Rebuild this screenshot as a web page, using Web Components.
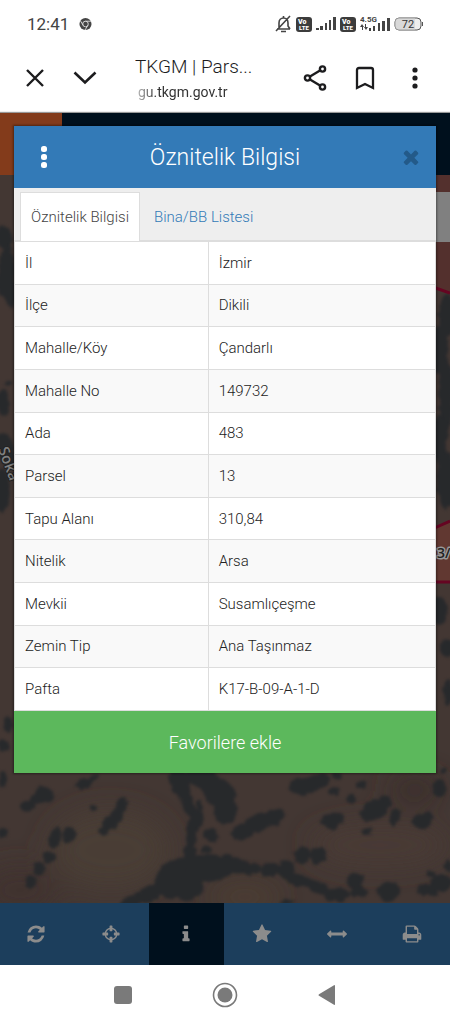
<!DOCTYPE html>
<html lang="tr">
<head>
<meta charset="utf-8">
<meta name="viewport" content="width=device-width, initial-scale=1">
<title>TKGM | Parsel Sorgu</title>
<style>
  body {
    margin: 0;
    min-height: 100vh;
    display: flex;
    flex-direction: column;
    background: #fff;
    font-family: Roboto, "Liberation Sans", sans-serif;
  }
</style>
</head>
<body>
  <status-bar></status-bar>
  <browser-bar>
    <span slot="title">TKGM | Pars...</span>
    <span slot="url">gu.tkgm.gov.tr</span>
  </browser-bar>
  <parcel-app>
    <parcel-dialog heading="Öznitelik Bilgisi">
      <tab-list slot="tabs" items="Öznitelik Bilgisi|Bina/BB Listesi"></tab-list>
      <attribute-table></attribute-table>
    </parcel-dialog>
  </parcel-app>
  <system-nav></system-nav>

<script>
const ICONS = {
  refresh: `<path transform="translate(128 128)" d="M1511 928q0 5-1 7-64 268-268 434.500t-478 166.500q-146 0-282.500-55t-243.500-157l-129 129q-19 19-45 19t-45-19-19-45v-448q0-26 19-45t45-19h448q26 0 45 19t19 45-19 45l-137 137q71 66 161 102t187 36q134 0 250-65t186-179q11-17 53-117 8-23 30-23h192q13 0 22.500 9.500t9.500 22.500zm25-800v448q0 26-19 45t-45 19h-448q-26 0-45-19t-19-45 19-45l138-138q-148-137-349-137-134 0-250 65t-186 179q-11 17-53 117-8 23-30 23h-199q-13 0-22.500-9.500t-9.500-22.500v-7q65-268 270-434.500t480-166.500q146 0 284 55.500t245 156.500l130-129q19-19 45-19t45 19 19 45z"/>`,
  crosshairs: `<path d="M1325 1024h-109q-26 0-45-19t-19-45v-128q0-26 19-45t45-19h109q-32-108-112.500-188.500t-188.500-112.500v109q0 26-19 45t-45 19h-128q-26 0-45-19t-19-45v-109q-108 32-188.500 112.500t-112.500 188.500h109q26 0 45 19t19 45v128q0 26-19 45t-45 19h-109q32 108 112.500 188.500t188.500 112.500v-109q0-26 19-45t45-19h128q26 0 45 19t19 45v109q108-32 188.500-112.500t112.500-188.500zm339-192v128q0 26-19 45t-45 19h-143q-37 161-154.500 278.500t-278.500 154.500v143q0 26-19 45t-45 19h-128q-26 0-45-19t-19-45v-143q-161-37-278.500-154.500t-154.500-278.500h-143q-26 0-45-19t-19-45v-128q0-26 19-45t45-19h143q37-161 154.500-278.500t278.500-154.500v-143q0-26 19-45t45-19h128q26 0 45 19t19 45v143q161 37 278.500 154.500t154.500 278.500h143q26 0 45 19t19 45z"/>`,
  info: `<path d="M1216 1344v128q0 26-19 45t-45 19h-512q-26 0-45-19t-19-45v-128q0-26 19-45t45-19h64v-384h-64q-26 0-45-19t-19-45v-128q0-26 19-45t45-19h384q26 0 45 19t19 45v576h64q26 0 45 19t19 45zm-128-1152v192q0 26-19 45t-45 19h-256q-26 0-45-19t-19-45v-192q0-26 19-45t45-19h256q26 0 45 19t19 45z"/>`,
  star: `<path d="M1728 647q0 22-26 48l-363 354 86 500q1 7 1 20 0 21-10.500 35.500t-30.500 14.500q-19 0-40-12l-449-236-449 236q-22 12-40 12-21 0-31.500-14.500t-10.500-35.500q0-6 2-20l86-500-364-354q-25-27-25-48 0-37 56-46l502-73 225-455q19-41 49-41t49 41l225 455 502 73q56 9 56 46z"/>`,
  measure: `<path d="M1792 896q0 26-19 45l-256 256q-19 19-45 19t-45-19-19-45v-128h-1024v128q0 26-19 45t-45 19-45-19l-256-256q-19-19-19-45t19-45l256-256q19-19 45-19t45 19 19 45v128h1024v-128q0-26 19-45t45-19 45 19l256 256q19 19 19 45z"/>`,
  print: `<path d="M448 1536h896v-256h-896v256zm0-640h896v-384h-160q-40 0-68-28t-28-68v-160h-640v640zm1152 64q0-26-19-45t-45-19-45 19-19 45 19 45 45 19 45-19 19-45zm128 0v416q0 13-9.500 22.500t-22.500 9.500h-224v160q0 40-28 68t-68 28h-960q-40 0-68-28t-28-68v-160h-224q-13 0-22.500-9.500t-9.500-22.500v-416q0-79 56.500-135.500t135.500-56.500h64v-544q0-40 28-68t68-28h672q40 0 88 20t76 48l152 152q28 28 48 76t20 88v256h64q79 0 135.500 56.500t56.500 135.500z"/>`,
  times: `<path d="M1490 1322q0 40-28 68l-136 136q-28 28-68 28t-68-28l-294-294-294 294q-28 28-68 28t-68-28l-136-136q-28-28-28-68t28-68l294-294-294-294q-28-28-28-68t28-68l136-136q28-28 68-28t68 28l294 294 294-294q28-28 68-28t68 28l136 136q28 28 28 68t-28 68l-294 294 294 294q28 28 28 68z"/>`
};

const resetButton = /* css */`
  button {
    appearance: none;
    border: 0;
    margin: 0;
    padding: 0;
    background: none;
    color: inherit;
    font: inherit;
    cursor: pointer;
    display: grid;
    place-items: center;
  }

  svg {
    display: block;
  }
`;

class StatusBar extends HTMLElement {
  constructor() {
    super();
    this.attachShadow({ mode: "open" });
  }

  static get styles() {
    return /* css */`
      :host {
        display: flex;
        align-items: center;
        justify-content: space-between;
        height: 48px;
        padding: 0 26px 0 27px;
        color: #444;
      }

      .left, .right {
        display: flex;
        align-items: center;
      }

      .left {
        gap: 10px;
        font-size: 17px;
      }

      .right {
        gap: 4px;
      }

      svg {
        display: block;
      }
    `;
  }

  connectedCallback() {
    this.render();
  }

  get volte() {
    return /* html */`
      <svg width="16" height="15" viewBox="0 0 16 15" fill="#fff" font-weight="900">
        <rect width="16" height="15" rx="3" fill="#3c3c3c"/>
        <text x="2" y="7" font-size="7">Vo</text>
        <text x="3" y="13" font-size="6">LTE</text>
      </svg>`;
  }

  render() {
    this.shadowRoot.innerHTML = /* html */`
    <style>${StatusBar.styles}</style>
    <div class="left">
      <time>12:41</time>
      <svg width="13" height="14" viewBox="0 0 14 14" fill="none">
        <circle cx="7" cy="7" r="6.500" fill="#444"/>
        <circle cx="7" cy="7" r="3" stroke="#ddd"/>
        <path d="M7 4h6M4.500 8.500l-3-5M9.500 8.500l-3 5" stroke="#ddd"/>
      </svg>
    </div>
    <div class="right">
      <svg width="17" height="18" viewBox="0 0 17 18" fill="none" stroke="#444" stroke-width="1.600">
        <path d="M2 14h13M4 13V8c0-3 2-5 4.500-5S13 5 13 8v3l2 3M8.500 1v2M6 16.500h5M1 16 15 1"/>
      </svg>
      ${this.volte}
      <svg width="20" height="14" viewBox="0 0 20 14" fill="#444">
        <path d="M0 11h3v2H0zM4 9h3v4H4zM9 6h2v7H9zM13 3h2v10h-2zM17 0h3v13h-3z"/>
      </svg>
      ${this.volte}
      <svg width="30" height="18" viewBox="0 0 30 18" fill="#444">
        <text x="0" y="7" font-size="8" font-weight="700">4.5G</text>
        <path d="M2 9 4 12H3v3H2v-3H0zM6 15l-2-3h1V9h1v3h2zM9 13h2v3H9zM13 11h2v5h-2zM18 8h2v8h-2zM22 6h3v10h-3zM27 3h3v13h-3z"/>
      </svg>
      <svg width="30" height="14" viewBox="0 0 30 14">
        <rect x="1" y="1" width="26" height="12" rx="4" fill="#eee" stroke="#555"/>
        <path d="M4 1h17v12H4a3 3 0 0 1-3-3V4a3 3 0 0 1 3-3z" fill="#ccc" opacity=".6"/>
        <path d="M28 5h1v4h-1z" fill="#555"/>
        <text x="14" y="11" font-size="11" text-anchor="middle" fill="#333">72</text>
      </svg>
    </div>`;
  }
}

class BrowserBar extends HTMLElement {
  constructor() {
    super();
    this.attachShadow({ mode: "open" });
  }

  static get styles() {
    return /* css */`
      ${resetButton}

      :host {
        display: flex;
        align-items: center;
        height: 65px;
        padding: 0 10px 6px;
        box-sizing: border-box;
        color: #1c1c1e;
      }

      button {
        width: 50px;
        height: 50px;
      }

      .page {
        flex: 1;
        min-width: 0;
        margin-left: 25px;
        padding-top: 3px;
        white-space: nowrap;
        overflow: hidden;
      }

      .title {
        font-size: 19px;
        font-weight: 300;
        line-height: 26px;
      }

      .url {
        font-size: 14px;
        line-height: 24px;
        padding-left: 3px;
        color: #333;
        -webkit-mask-image: linear-gradient(90deg, #0006 4px, #000 22px);
        mask-image: linear-gradient(90deg, #0006 4px, #000 22px);
      }
    `;
  }

  connectedCallback() {
    this.render();
  }

  render() {
    this.shadowRoot.innerHTML = /* html */`
    <style>${BrowserBar.styles}</style>
    <button aria-label="Kapat">
      <svg width="18" height="18" viewBox="0 0 18 18" fill="none" stroke="currentColor" stroke-width="2.400">
        <path d="m1 1 16 16M17 1 1 17"/>
      </svg>
    </button>
    <button aria-label="Küçült">
      <svg width="24" height="14" viewBox="0 0 24 14" fill="none" stroke="currentColor" stroke-width="2.600">
        <path d="m1.500 1.500 10.500 10 10.500-10"/>
      </svg>
    </button>
    <div class="page">
      <div class="title"><slot name="title"></slot></div>
      <div class="url"><slot name="url"></slot></div>
    </div>
    <button aria-label="Paylaş">
      <svg width="24" height="26" viewBox="0 0 24 26" fill="none" stroke="currentColor" stroke-width="2.400">
        <circle cx="4.500" cy="13" r="2.600"/>
        <circle cx="19.500" cy="4" r="2.600"/>
        <circle cx="19.500" cy="22" r="2.600"/>
        <path d="m7 11.500 10-6M7 14.500l10 6"/>
      </svg>
    </button>
    <button aria-label="Yer işareti">
      <svg width="20" height="24" viewBox="0 0 20 24" fill="none" stroke="currentColor" stroke-width="2.300">
        <path d="M2 22V4q0-2 2-2h12q2 0 2 2v18l-8-4z"/>
      </svg>
    </button>
    <button aria-label="Menü">
      <svg width="6" height="22" viewBox="0 0 6 22" fill="currentColor">
        <circle cx="3" cy="3" r="2.600"/>
        <circle cx="3" cy="11" r="2.600"/>
        <circle cx="3" cy="19" r="2.600"/>
      </svg>
    </button>`;
  }
}

class MapView extends HTMLElement {
  constructor() {
    super();
    this.attachShadow({ mode: "open" });
  }

  static get styles() {
    return /* css */`
      :host {
        display: block;
        overflow: hidden;
        background: #433630;
      }

      svg {
        display: block;
        width: 100%;
        height: 100%;
      }
    `;
  }

  // Clumps of trees and bushes: x, y, rx, ry, rotation
  static get bushes() {
    return [
      [28, 806, 7, 6, 0], [44, 795, 10, 8, 20], [37, 799, 8, 5, 0], [83, 784, 9, 5, -10], [93, 778, 7, 3, -30],
      [122, 805, 6, 7, 0], [117, 815, 6, 9, 25], [110, 823, 8, 7, 0], [104, 831, 6, 5, 0], [93, 808, 4, 3, 0],
      [69, 835, 7, 8, 20], [55, 838, 6, 11, 15], [49, 857, 7, 6, -20], [39, 869, 6, 7, 0], [31, 882, 6, 7, 0],
      [3, 833, 5, 5, 0], [3, 780, 4, 9, 0],
      [180, 783, 10, 17, -20], [188, 804, 6, 17, -20], [197, 820, 6, 11, 0], [191, 835, 5, 15, 0],
      [204, 779, 19, 10, 20], [219, 793, 18, 14, 35], [225, 809, 12, 15, 0], [199, 805, 3, 5, 0],
      [211, 835, 8, 7, 0], [207, 849, 5, 4, 0], [190, 851, 6, 9, 0],
      [244, 831, 13, 8, -20], [258, 823, 15, 9, -20], [274, 817, 11, 8, -20],
      [180, 868, 22, 10, -15], [205, 868, 29, 14, 0], [172, 882, 17, 17, -30], [190, 890, 14, 10, -30],
      [151, 893, 14, 8, -25], [134, 900, 14, 6, -20], [236, 866, 13, 8, 0], [227, 857, 5, 4, 0],
      [251, 869, 9, 6, 0], [270, 870, 10, 7, 0], [286, 869, 9, 9, 0], [298, 880, 13, 6, 15], [317, 887, 12, 6, 20],
      [337, 895, 13, 7, 0], [355, 881, 8, 9, 0], [359, 892, 9, 6, 0], [389, 892, 11, 10, 0], [287, 902, 7, 3, 0],
      [428, 890, 12, 6, 0], [441, 883, 11, 9, 0], [448, 866, 4, 6, 0], [431, 874, 4, 3, 0],
      [302, 855, 8, 9, 0], [318, 855, 9, 8, 0],
      [303, 786, 14, 9, 0], [316, 783, 12, 7, -10], [323, 778, 7, 5, 0], [334, 791, 6, 4, 0], [351, 799, 5, 5, 0],
      [361, 785, 5, 4, 0], [337, 776, 5, 4, 0], [331, 821, 10, 8, 0], [339, 819, 5, 6, 0],
      [376, 809, 13, 10, -20], [369, 814, 9, 7, 0], [385, 803, 7, 7, 0], [395, 817, 5, 9, 20], [367, 831, 6, 4, 0],
      [422, 821, 9, 8, 0], [428, 817, 5, 5, 0], [440, 788, 7, 9, 0], [444, 771, 4, 3, 0],
      [4, 237, 8, 12, 0], [7, 270, 8, 27, 0], [11, 294, 7, 14, 0], [2, 284, 6, 12, 0], [3, 402, 6, 14, 0],
      [6, 451, 9, 20, -20], [2, 490, 8, 22, 0], [9, 383, 3, 3, 0], [8, 724, 5, 8, 0], [3, 745, 6, 6, 0],
      [447, 315, 9, 20, 0], [440, 350, 8, 25, 0], [446, 396, 7, 36, 0], [440, 440, 7, 25, 0], [446, 480, 9, 29, 0],
      [439, 610, 8, 14, 0], [447, 648, 7, 9, 0], [448, 692, 5, 13, 0]
    ];
  }

  connectedCallback() {
    this.render();
  }

  render() {
    const bushes = MapView.bushes
      .map(([x, y, rx, ry, angle]) =>
        `<ellipse cx="${x}" cy="${y}" rx="${rx}" ry="${ry}" transform="rotate(${angle} ${x} ${y})"/>`)
      .join("");

    this.shadowRoot.innerHTML = /* html */`
    <style>${MapView.styles}</style>
    <svg viewBox="0 175 450 728" preserveAspectRatio="xMidYMax slice">
      <defs>
        <filter id="rough" x="-5%" y="-5%" width="110%" height="110%" color-interpolation-filters="sRGB">
          <feTurbulence type="fractalNoise" baseFrequency=".16" numOctaves="3" seed="8"/>
          <feDisplacementMap in="SourceGraphic" scale="6" xChannelSelector="R" yChannelSelector="G"/>
          <feGaussianBlur stdDeviation="1.500"/>
        </filter>
        <filter id="soft" x="-50%" y="-50%" width="200%" height="200%">
          <feGaussianBlur stdDeviation="14"/>
        </filter>
      </defs>
      <rect y="175" width="450" height="728" fill="#433733"/>
      <g filter="url(#soft)">
        <ellipse cx="110" cy="850" rx="60" ry="40" fill="#4a3d36"/>
        <ellipse cx="380" cy="845" rx="70" ry="20" fill="#493b36"/>
        <ellipse cx="245" cy="897" rx="35" ry="10" fill="#503f32"/>
        <ellipse cx="20" cy="890" rx="40" ry="22" fill="#40332f"/>
        <ellipse cx="415" cy="790" rx="28" ry="14" fill="#3a2e2c"/>
      </g>
      <g fill="#25282b" opacity=".92" filter="url(#rough)">${bushes}</g>
      <path d="M430 175h20v118l-20-7z" fill="#6b2626" opacity=".4"/>
      <path d="M430 530l20-9v61h-20z" fill="#8f3a30" opacity=".4"/>
      <path d="m430 286 20 7M430 530l20-9M430 582h20" stroke="#650522" stroke-width="3"/>
      <rect x="430" y="192" width="20" height="50" fill="#808080"/>
      <g font-family="Open Sans, sans-serif" font-weight="600" paint-order="stroke" stroke-linejoin="round">
        <text x="437" y="558" font-size="14" fill="#222" stroke="#999" stroke-width="3">3/</text>
        <text transform="translate(-2 449) rotate(70)" font-size="15" fill="#808080" stroke="#222" stroke-width="2">Soka</text>
      </g>
    </svg>`;
  }
}

class ToolBar extends HTMLElement {
  constructor() {
    super();
    this.attachShadow({ mode: "open" });
  }

  static get styles() {
    return /* css */`
      ${resetButton}

      :host {
        display: grid;
        grid-auto-flow: column;
        grid-auto-columns: 1fr;
        height: 62px;
        margin-left: -2px;
        background: #1c3e5c;
        color: #8c8c8c;
      }

      .active {
        background: #00101d;
      }
    `;
  }

  connectedCallback() {
    this.render();
  }

  render() {
    const tools = [
      ["refresh", "Yenile"],
      ["crosshairs", "Konum"],
      ["info", "Bilgi"],
      ["star", "Favoriler"],
      ["measure", "Ölçüm"],
      ["print", "Yazdır"]
    ];

    this.shadowRoot.innerHTML = /* html */`
    <style>${ToolBar.styles}</style>
    ${tools.map(([icon, label]) => /* html */`
      <button class="${icon === "info" ? "active" : ""}" aria-label="${label}">
        <svg width="20" height="20" viewBox="0 0 1792 1792" fill="currentColor">${ICONS[icon]}</svg>
      </button>`).join("")}`;
  }
}

class TabList extends HTMLElement {
  constructor() {
    super();
    this.attachShadow({ mode: "open" });
  }

  static get styles() {
    return /* css */`
      ${resetButton}

      :host {
        display: flex;
        gap: 3px;
        height: 53px;
        box-sizing: border-box;
        padding: 4px 6px 0;
        background: #eee;
        border-bottom: 1px solid #ddd;
        font-size: 15px;
        font-weight: 300;
      }

      button {
        padding: 0 10px;
        border: 1px solid transparent;
        border-bottom: 0;
        color: #337ab7;
      }

      button[aria-selected="true"] {
        background: #fff;
        border-color: #ddd;
        color: #444;
        margin-bottom: -1px;
      }
    `;
  }

  connectedCallback() {
    this.items = this.getAttribute("items").split("|");
    this.render();
  }

  render() {
    this.shadowRoot.innerHTML = /* html */`
    <style>${TabList.styles}</style>
    ${this.items.map((item, i) => `<button role="tab" aria-selected="${i === 0}">${item}</button>`).join("")}`;
    this.setAttribute("role", "tablist");
  }
}

class AttributeTable extends HTMLElement {
  constructor() {
    super();
    this.attachShadow({ mode: "open" });
  }

  static get styles() {
    return /* css */`
      :host {
        display: block;
        background: #fff;
        color: #222;
        font-size: 15px;
      }

      table {
        width: 100%;
        height: 470px;
        border-collapse: collapse;
        table-layout: fixed;
      }

      th, td {
        padding: 0 10px;
        border: 1px solid #ddd;
        font-weight: 300;
        line-height: 20px;
        text-align: left;
      }

      th {
        width: 46%;
        box-sizing: border-box;
      }

      tr:nth-child(even) {
        background: #f9f9f9;
      }
    `;
  }

  connectedCallback() {
    this.render();
  }

  render() {
    const rows = [
      ["İl", "İzmir"],
      ["İlçe", "Dikili"],
      ["Mahalle/Köy", "Çandarlı"],
      ["Mahalle No", "149732"],
      ["Ada", "483"],
      ["Parsel", "13"],
      ["Tapu Alanı", "310,84"],
      ["Nitelik", "Arsa"],
      ["Mevkii", "Susamlıçeşme"],
      ["Zemin Tip", "Ana Taşınmaz"],
      ["Pafta", "K17-B-09-A-1-D"]
    ];

    this.shadowRoot.innerHTML = /* html */`
    <style>${AttributeTable.styles}</style>
    <table>
      <tbody>
        ${rows.map(([name, value]) => `<tr><th scope="row">${name}</th><td>${value}</td></tr>`).join("")}
      </tbody>
    </table>`;
  }
}

class ParcelDialog extends HTMLElement {
  constructor() {
    super();
    this.attachShadow({ mode: "open" });
  }

  static get styles() {
    return /* css */`
      ${resetButton}

      :host {
        display: block;
        box-shadow: 0 0 2px 1px #0006;
      }

      header {
        display: grid;
        grid-template-columns: 60px 1fr 50px;
        align-items: center;
        height: 62px;
        background: #337ab7;
        color: #fff;
      }

      header button {
        height: 50px;
      }

      .close {
        color: #235a89;
      }

      h2 {
        margin: 0;
        padding-right: 10px;
        font-size: 23px;
        font-weight: 300;
        text-align: center;
      }

      .favorite {
        width: 100%;
        height: 62px;
        background: #5cb85c;
        color: #fff;
        font-size: 18px;
        font-weight: 300;
      }
    `;
  }

  connectedCallback() {
    this.render();
  }

  render() {
    this.shadowRoot.innerHTML = /* html */`
    <style>${ParcelDialog.styles}</style>
    <header>
      <button aria-label="Seçenekler">
        <svg width="6" height="22" viewBox="0 0 6 22" fill="currentColor">
          <rect y="0" width="6" height="6" rx="2.500"/>
          <rect y="8" width="6" height="6" rx="2.500"/>
          <rect y="16" width="6" height="6" rx="2.500"/>
        </svg>
      </button>
      <h2>${this.getAttribute("heading")}</h2>
      <button class="close" aria-label="Kapat">
        <svg width="22" height="22" viewBox="0 0 1792 1792" fill="currentColor">${ICONS.times}</svg>
      </button>
    </header>
    <slot name="tabs"></slot>
    <slot></slot>
    <button class="favorite">Favorilere ekle</button>`;
  }
}

class ParcelApp extends HTMLElement {
  constructor() {
    super();
    this.attachShadow({ mode: "open" });
  }

  static get styles() {
    return /* css */`
      :host {
        flex: 1;
        display: flex;
        flex-direction: column;
        position: relative;
      }

      .banner {
        height: 62px;
        background: linear-gradient(90deg, #833b1b 62px, #00101d 62px);
        box-shadow: 0 -1px 1px #0006;
      }

      map-view {
        flex: 1 1 0;
        min-height: 600px;
      }

      .overlay {
        position: absolute;
        inset: 13px 14px auto;
      }
    `;
  }

  connectedCallback() {
    this.render();
  }

  render() {
    this.shadowRoot.innerHTML = /* html */`
    <style>${ParcelApp.styles}</style>
    <div class="banner"></div>
    <map-view></map-view>
    <tool-bar></tool-bar>
    <div class="overlay"><slot></slot></div>`;
  }
}

class SystemNav extends HTMLElement {
  constructor() {
    super();
    this.attachShadow({ mode: "open" });
  }

  static get styles() {
    return /* css */`
      ${resetButton}

      :host {
        display: flex;
        justify-content: center;
        align-items: center;
        gap: 52px;
        height: 59px;
        background: #fff;
        color: #7a7a7a;
      }

      button {
        width: 50px;
        height: 50px;
      }
    `;
  }

  connectedCallback() {
    this.render();
  }

  render() {
    this.shadowRoot.innerHTML = /* html */`
    <style>${SystemNav.styles}</style>
    <button aria-label="Son uygulamalar">
      <svg width="18" height="18" viewBox="0 0 18 18" fill="currentColor"><rect width="18" height="18" rx="3"/></svg>
    </button>
    <button aria-label="Ana ekran">
      <svg width="26" height="26" viewBox="0 0 26 26" fill="currentColor">
        <circle cx="13" cy="13" r="11.500" fill="none" stroke="currentColor" stroke-width="1.600"/>
        <circle cx="13" cy="13" r="7.500"/>
      </svg>
    </button>
    <button aria-label="Geri">
      <svg width="18" height="20" viewBox="0 0 18 20" fill="currentColor"><path d="M1 9.200 16 .2q1-.6 1 .8v18q0 1.400-1 .8L1 10.800q-1-.8 0-1.600z"/></svg>
    </button>`;
  }
}

customElements.define("status-bar", StatusBar);
customElements.define("browser-bar", BrowserBar);
customElements.define("map-view", MapView);
customElements.define("tool-bar", ToolBar);
customElements.define("tab-list", TabList);
customElements.define("attribute-table", AttributeTable);
customElements.define("parcel-dialog", ParcelDialog);
customElements.define("parcel-app", ParcelApp);
customElements.define("system-nav", SystemNav);
</script>
</body>
</html>
